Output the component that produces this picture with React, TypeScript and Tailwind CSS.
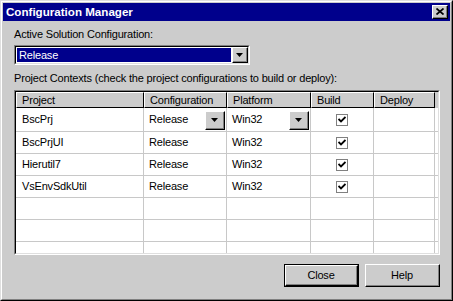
import React from "react";

const font = { fontFamily: '"Liberation Sans", Arial, sans-serif' };

function DownArrow() {
  return (
    <svg width="7" height="4" viewBox="0 0 7 4" className="block">
      <path d="M0 0H7L3.5 4Z" fill="#000" />
    </svg>
  );
}

function RaisedBtn({ className, children }: { className?: string; children?: React.ReactNode }) {
  return (
    <div className={"border-t border-l border-t-white border-l-white border-r border-b border-r-black border-b-black bg-[#cccccc] " + (className || "")}>
      <div className="w-full h-full border-r border-b border-r-[#808080] border-b-[#808080] flex items-center justify-center">
        {children}
      </div>
    </div>
  );
}

function Check() {
  return (
    <div className="w-[12px] h-[12px] border border-[#808080] bg-white flex items-center justify-center">
      <svg width="8" height="7" viewBox="0 0 8 7" className="block">
        <path d="M0.5 3 L3 5.5 L7.5 1" stroke="#000" strokeWidth="1.8" fill="none" />
      </svg>
    </div>
  );
}

const cols = [128, 83, 84, 63, 61];

type Row = { p: string; c: string; pl: string; b: boolean; combo?: boolean };

const rows: Row[] = [
  { p: "BscPrj", c: "Release", pl: "Win32", b: true, combo: true },
  { p: "BscPrjUI", c: "Release", pl: "Win32", b: true },
  { p: "Hierutil7", c: "Release", pl: "Win32", b: true },
  { p: "VsEnvSdkUtil", c: "Release", pl: "Win32", b: true },
  { p: "", c: "", pl: "", b: false },
  { p: "", c: "", pl: "", b: false },
  { p: "", c: "", pl: "", b: false },
];

export default function App() {
  return (
    <div className="w-[453px] h-[301px] bg-[#cccccc] text-[11px] tracking-[-0.18px] text-black" style={font}>
      <div className="w-full h-full border-t border-l border-t-[#dfdfdf] border-l-[#dfdfdf] border-r border-b border-r-black border-b-black">
        <div className="w-full h-full border-t border-l border-t-white border-l-white border-r border-b border-r-[#808080] border-b-[#808080] p-[1px] flex flex-col">
          {/* title bar */}
          <div className="h-[18px] bg-[#00008c] flex items-center justify-between pl-[3px] pr-[2px]">
            <span className="text-white font-bold text-[11.6px] tracking-normal leading-none">Configuration Manager</span>
            <RaisedBtn className="w-[16px] h-[14px]">
              <svg width="8" height="7" viewBox="0 0 8 7" className="block">
                <path d="M0.5 0.5 L7.5 6.5 M7.5 0.5 L0.5 6.5" stroke="#000" strokeWidth="1.7" />
              </svg>
            </RaisedBtn>
          </div>
          {/* body */}
          <div className="flex flex-col pl-[11px] pr-[10px] pt-[7px]">
            <div className="h-[13px] leading-[13px]">Active Solution Configuration:</div>
            <div className="mt-[4px] w-[236px] h-[20px] border-t border-l border-t-[#808080] border-l-[#808080] border-r border-b border-r-white border-b-white">
              <div className="w-full h-full border-t border-l border-t-black border-l-black border-r border-b border-r-[#dfdfdf] border-b-[#dfdfdf] bg-white flex">
                <div className="flex-1 p-[1px]">
                  <div className="w-full h-full bg-[#00008c] text-white flex items-center pl-[2px] leading-none">Release</div>
                </div>
                <RaisedBtn className="w-[16px] h-[16px]">
                  <DownArrow />
                </RaisedBtn>
              </div>
            </div>
            <div className="mt-[7px] h-[13px] leading-[13px]">Project Contexts (check the project configurations to build or deploy):</div>
            {/* grid */}
            <div className="mt-[5px] w-[426px] h-[165px] border-t border-l border-t-[#808080] border-l-[#808080] border-r border-b border-r-white border-b-white">
              <div className="w-full h-full border-t border-l border-t-black border-l-black border-r border-b border-r-[#dfdfdf] border-b-[#dfdfdf] bg-white overflow-hidden">
                <div className="flex h-[16px] bg-[#cccccc]">
                  {["Project", "Configuration", "Platform", "Build", "Deploy"].map((h, i) => (
                    <div
                      key={h}
                      style={{ width: cols[i] }}
                      className="h-full border-t border-l border-t-white border-l-white border-r border-b border-r-black border-b-black pl-[5px] flex items-center leading-none"
                    >
                      {h}
                    </div>
                  ))}
                </div>
                {rows.map((r, ri) => (
                  <div key={ri} className={"flex border-b border-b-[#c8c8c8] " + (ri === 0 ? "h-[24px]" : "h-[22px]")}>
                    <div style={{ width: cols[0] }} className="h-full border-r border-r-[#c8c8c8] pl-[6px] flex items-center">
                      {r.p}
                    </div>
                    <div style={{ width: cols[1] }} className="h-full border-r border-r-[#c8c8c8] pl-[5px] pr-[1px] flex items-center justify-between">
                      <span>{r.c}</span>
                      {r.combo && (
                        <RaisedBtn className="w-[20px] h-[19px] mt-[2px]">
                          <DownArrow />
                        </RaisedBtn>
                      )}
                    </div>
                    <div style={{ width: cols[2] }} className="h-full border-r border-r-[#c8c8c8] pl-[5px] pr-[1px] flex items-center justify-between">
                      <span>{r.pl}</span>
                      {r.combo && (
                        <RaisedBtn className="w-[20px] h-[19px] mt-[2px]">
                          <DownArrow />
                        </RaisedBtn>
                      )}
                    </div>
                    <div style={{ width: cols[3] }} className="h-full border-r border-r-[#c8c8c8] flex items-center justify-center">
                      {r.b && <Check />}
                    </div>
                    <div style={{ width: cols[4] }} className="h-full border-r border-r-[#c8c8c8]" />
                  </div>
                ))}
              </div>
            </div>
            {/* buttons */}
            <div className="mt-[9px] flex justify-end gap-[6px]">
              <div className="w-[75px] h-[23px] border border-black">
                <RaisedBtn className="w-full h-full">Close</RaisedBtn>
              </div>
              <RaisedBtn className="w-[75px] h-[23px]">Help</RaisedBtn>
            </div>
          </div>
        </div>
      </div>
    </div>
  );
}
